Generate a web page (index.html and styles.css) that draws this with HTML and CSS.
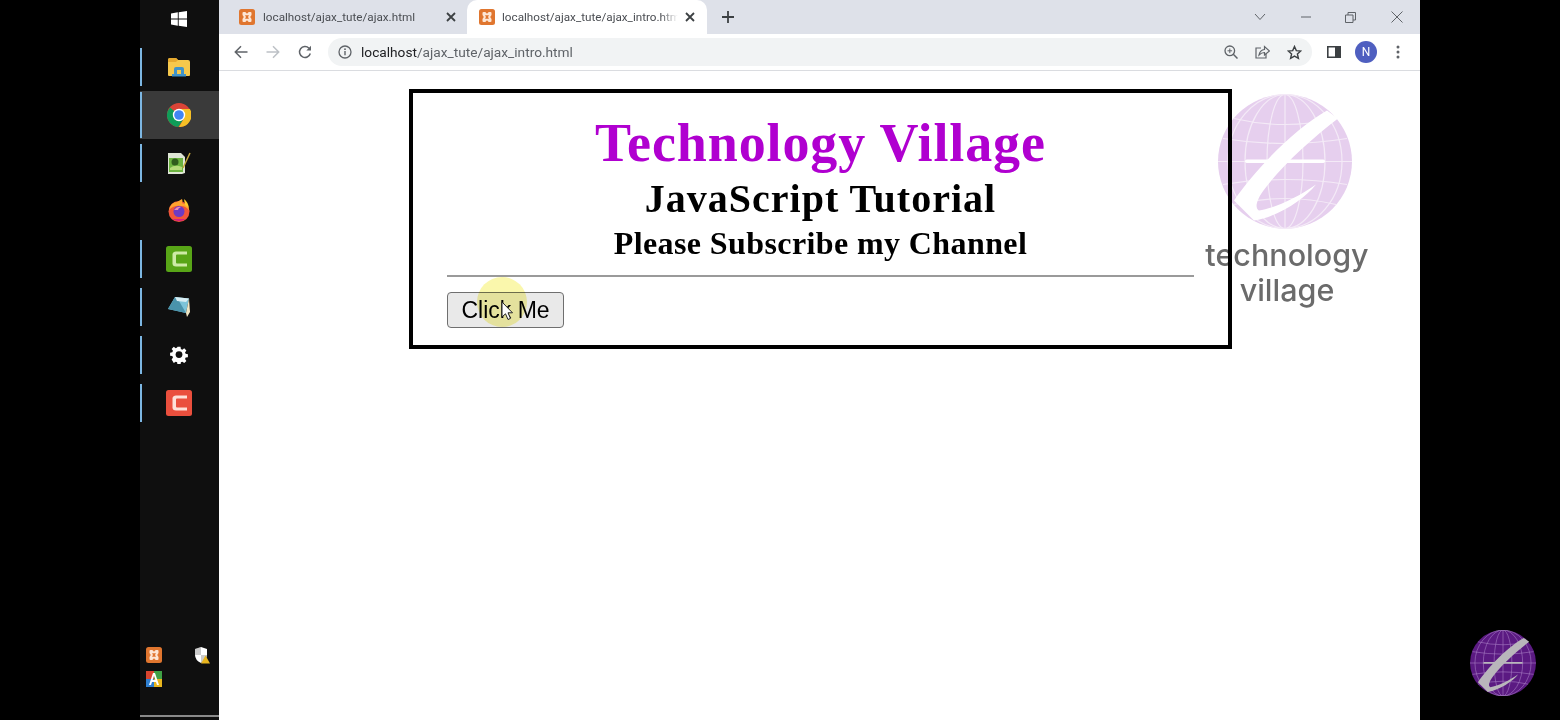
FILE: index.html
```html
<!DOCTYPE html>
<html lang="en">
<head>
    <meta charset="UTF-8">
    <meta name="viewport" content="width=device-width, initial-scale=1.0">
    <title>Ajax Intro</title>
    <link rel="stylesheet" href="styles.css">
</head>
<body>
    <!-- shared symbols -->
    <svg class="defs" width="0" height="0">
        <symbol id="xampp" viewBox="0 0 16 16">
            <rect width="16" height="16" rx="2.5" fill="#e0762f"/>
            <path d="M3.500 4Q3.500 3 4.500 3H6.300L8 4.700 9.700 3H11.500Q12.500 3 12.500 4V6L11.200 8 12.500 10V12Q12.500 13 11.500 13H9.700L8 11.300 6.300 13H4.500Q3.500 13 3.500 12V10L4.800 8 3.500 6z" fill="#fde6d4"/>
            <path d="M6 6.300H10L9 8 10 9.700H6L7 8z" fill="#e0762f"/>
        </symbol>
        <symbol id="globe" viewBox="0 0 134 134">
            <circle cx="67" cy="67" r="67" fill="var(--globe)"/>
            <g fill="none" stroke="var(--grid)" stroke-width="1.200">
                <ellipse cx="67" cy="67" rx="18" ry="67"/>
                <ellipse cx="67" cy="67" rx="40" ry="67"/>
                <ellipse cx="67" cy="67" rx="57" ry="67"/>
                <path d="M67 0v134M0 67h134"/>
                <path d="M16 24q51 12 102 0M5 44q62 10 124 0M5 90q62-10 124 0M16 110q51-12 102 0"/>
            </g>
            <path d="M109 16C77 34 38 74 16 106L36 126C61 122 87 104 98 90C81 102 57 114 41 116C36 114 39 104 47 94C64 71 94 44 120 24Z" fill="var(--swoosh)"/>
            <rect x="27" y="65" width="80" height="3.5" rx="1.7" fill="var(--swoosh)"/>
        </symbol>
        <symbol id="camtasia" viewBox="0 0 26 26">
            <rect width="26" height="26" rx="2.5" fill="var(--cam)"/>
            <path d="M21 5.500H10Q7 5.500 6.500 8V18Q7 20.500 10 20.500H21V17.500H11Q10 17.500 10 16.500V9.500Q10 8.500 11 8.500H21Z" fill="var(--cam-light)"/>
        </symbol>
    </svg>

    <div class="screen">
        <div class="letterbox"></div>

        <aside class="taskbar">
            <div class="start">
                <svg width="16" height="16" viewBox="0 0 16 16"><path d="M0 2.400 6.800 1.300V7.500H0zM7.700 1.200 16 0V7.500H7.700zM0 8.400H6.800V14.700L0 13.600zM7.700 8.400H16V16L7.700 14.800z" fill="#fff"/></svg>
            </div>
            <div class="task running">
                <svg width="24" height="20" viewBox="0 0 24 20"><path d="M1 3q0-2 2-2h6l2 2h10q2 0 2 2v13q0 1-1 1H2q-1 0-1-1z" fill="#f5c84c"/><path d="M1 3q0-2 2-2h6l2 2-2 2H1z" fill="#e5a92f"/><path d="M7 18v-6q0-2 2-2h6q2 0 2 2v6h-3v-5h-4v5z" fill="#3f93c9"/><rect x="5" y="17" width="14" height="2.500" fill="#3f93c9"/></svg>
            </div>
            <div class="task running active">
                <svg width="24" height="24" viewBox="0 0 24 24">
                    <circle cx="12" cy="12" r="12" fill="#db4437"/>
                    <path d="M12 12 1.600 18A12 12 0 0 1 3 4.500z" fill="#0f9d58"/>
                    <path d="M1.600 18 7 9l5 3 5.200 3-5.900 9A12 12 0 0 1 1.600 18z" fill="#0f9d58"/>
                    <path d="M12 24 17.200 15 12 6H22.900A12 12 0 0 1 12 24z" fill="#f6c026"/>
                    <circle cx="12" cy="12" r="6.200" fill="#fff"/>
                    <circle cx="12" cy="12" r="4.800" fill="#4285f4"/>
                </svg>
            </div>
            <div class="task running">
                <svg width="24" height="24" viewBox="0 0 24 24"><path d="M1 2h13l4 4v16l-3 1H1z" fill="#dfe6d5"/><rect x="2" y="7" width="14" height="14" fill="#6cb33f"/><circle cx="8" cy="11" r="3.500" fill="#2f5d1c"/><path d="M3 17q5-4 12-1v3H3z" fill="#b5dc7a"/><path d="M16 17 23 2" stroke="#c4a93b" stroke-width="1.500"/></svg>
            </div>
            <div class="task task-fox">
                <svg width="24" height="24" viewBox="0 0 24 24"><circle cx="12" cy="13.500" r="10.500" fill="#f0553a"/><path d="M2 12Q4 4 10 4L15 1Q16 3 15 5Q21 6 22.500 13Q19 8 14 8Q7 7 2 12z" fill="#ffa42e"/><path d="M17 1q4 3 5 9l-4-3z" fill="#ffcb2e"/><circle cx="12" cy="13.500" r="5.500" fill="#6b3bc4"/><path d="M7 12q3-4 7-3-3 1-3 3h-4z" fill="#f08ab0"/><path d="M5 21q7 4 14 0-7 0-14 0z" fill="#d61e7d"/></svg>
            </div>
            <div class="task running cam-green">
                <svg width="26" height="26"><use href="#camtasia"/></svg>
            </div>
            <div class="task running">
                <svg width="24" height="22" viewBox="0 0 24 22"><path d="M8 1 22 2.500 19 17 1 13z" fill="#7cc4d9"/><path d="M8 1 1 13 19 17 12 5z" fill="#4a93ab"/><path d="M22 2.500 23 16 20 21 19 17z" fill="#f0e6c3"/><path d="M8 1 22 2.500 19 6 10 5z" fill="#d7edf3"/></svg>
            </div>
            <div class="task running">
                <svg width="18" height="18" viewBox="0 0 18 18"><path d="M7.300 0h3.400l.4 2.500 1.600.7 2.100-1.500 2.400 2.400-1.500 2.100.7 1.600 2.500.4v3.400l-2.500.4-.7 1.600 1.500 2.100-2.400 2.400-2.100-1.500-1.600.7-.4 2.500H7.300l-.4-2.500-1.600-.7-2.100 1.500L.8 14l1.500-2.100-.7-1.600L-.9 9.900V6.500l2.500-.4.7-1.600L.8 2.400 3.200 0l2.100 1.500 1.600-.7z" transform="translate(.9 .8) scale(.9)" fill="#fff"/><circle cx="9" cy="8.600" r="3.400" fill="#111"/></svg>
            </div>
            <div class="task running cam-red">
                <svg width="26" height="26"><use href="#camtasia"/></svg>
            </div>

            <div class="tray">
                <svg width="16" height="16"><use href="#xampp"/></svg>
                <svg width="16" height="17" viewBox="0 0 16 17"><path d="M7 0 13 2V8Q13 13 7 16 1 13 1 8V2z" fill="#fff"/><path d="M7 0V8H1V2zM7 8H13Q13 13 7 16z" fill="#2b2b2b" opacity=".25"/><path d="M11.500 8.500 16 16.500H7z" fill="#e8b51f"/></svg>
                <svg width="16" height="16" viewBox="0 0 16 16"><rect width="8" height="8" fill="#d9452f"/><rect x="8" width="8" height="8" fill="#3fa045"/><rect y="8" width="8" height="8" fill="#2f7fd0"/><rect x="8" y="8" width="8" height="8" fill="#e9b61e"/><path d="M3 14 7 2h2l4 12h-2l-1-3H6l-1 3zM6.600 9h2.800L8 4.800z" fill="#fff"/></svg>
            </div>
            <div class="task-line"></div>
        </aside>

        <main class="browser">
            <div class="tabstrip">
                <div class="tab">
                    <svg width="16" height="16"><use href="#xampp"/></svg>
                    <span class="tab-title">localhost/ajax_tute/ajax.html</span>
                    <svg class="tab-close" width="10" height="10" viewBox="0 0 10 10"><path d="M1 1l8 8M9 1l-8 8" stroke="#3c4043" stroke-width="1.800"/></svg>
                </div>
                <div class="tab tab-active">
                    <svg width="16" height="16"><use href="#xampp"/></svg>
                    <span class="tab-title">localhost/ajax_tute/ajax_intro.html</span>
                    <svg class="tab-close" width="10" height="10" viewBox="0 0 10 10"><path d="M1 1l8 8M9 1l-8 8" stroke="#3c4043" stroke-width="1.800"/></svg>
                </div>
                <svg class="new-tab" width="14" height="14" viewBox="0 0 14 14"><path d="M7 1v12M1 7h12" stroke="#3c4043" stroke-width="1.800"/></svg>

                <div class="window-controls">
                    <svg width="12" height="8" viewBox="0 0 12 8"><path d="M1 1l5 5.500L11 1" fill="none" stroke="#5f6368" stroke-width="1"/></svg>
                    <svg width="10" height="2" viewBox="0 0 10 2"><path d="M0 1h10" stroke="#5f6368" stroke-width="1"/></svg>
                    <svg width="11" height="11" viewBox="0 0 11 11"><path d="M.5 3h7.500v7.500H.5zM3 3V.5h7.500V8H8" fill="none" stroke="#5f6368" stroke-width="1"/></svg>
                    <svg width="12" height="12" viewBox="0 0 12 12"><path d="M.5.5l11 11M11.500.5l-11 11" stroke="#5f6368" stroke-width="1"/></svg>
                </div>
            </div>

            <div class="toolbar">
                <div class="nav-buttons">
                    <svg width="14" height="14" viewBox="0 0 14 14"><path d="M13.500 7H1.500M7 1.300 1.300 7 7 12.700" fill="none" stroke="#5f6368" stroke-width="1.500"/></svg>
                    <svg width="14" height="14" viewBox="0 0 14 14"><path d="M.5 7h12M7 1.300 12.700 7 7 12.700" fill="none" stroke="#bdc1c6" stroke-width="1.500"/></svg>
                    <svg width="14" height="14" viewBox="0 0 14 14"><path d="M12.300 8.500A5.500 5.500 0 1 1 11 3.200" fill="none" stroke="#5f6368" stroke-width="1.500"/><path d="M13 .8V5.500H8.300z" fill="#5f6368"/></svg>
                </div>
                <div class="omnibox">
                    <svg width="14" height="14" viewBox="0 0 14 14"><circle cx="7" cy="7" r="6" fill="none" stroke="#5f6368" stroke-width="1.300"/><path d="M7 6v4.300" stroke="#5f6368" stroke-width="1.400"/><circle cx="7" cy="4.200" r=".9" fill="#5f6368"/></svg>
                    <span class="url"><b>localhost</b>/ajax_tute/ajax_intro.html</span>
                    <div class="omni-actions">
                        <svg width="14" height="14" viewBox="0 0 14 14"><circle cx="5.800" cy="5.800" r="4.800" fill="none" stroke="#5f6368" stroke-width="1.300"/><path d="M9.300 9.300 13.500 13.500" stroke="#5f6368" stroke-width="1.500"/><path d="M3.500 5.800h4.600M5.800 3.500v4.600" stroke="#5f6368"/></svg>
                        <svg width="15" height="14" viewBox="0 0 15 14"><path d="M6 3H1v10h10V9" fill="none" stroke="#5f6368" stroke-width="1.200"/><path d="M4 10Q5 5 9.500 4.500V1.500L14.500 6 9.500 10V7.500Q6.500 7.500 4 10z" fill="none" stroke="#5f6368" stroke-width="1.200"/></svg>
                        <svg width="15" height="15" viewBox="0 0 15 15"><path d="M7.500 1.500 9.300 5.600 13.800 6 10.400 9 11.400 13.400 7.500 11.100 3.600 13.400 4.600 9 1.200 6 5.700 5.600z" fill="none" stroke="#3c4043" stroke-width="1.400"/></svg>
                    </div>
                </div>
                <div class="toolbar-end">
                    <svg width="14" height="12" viewBox="0 0 14 12"><path d="M.8.800h12.400v10.400H.8z" fill="none" stroke="#3c4043" stroke-width="1.600"/><rect x="8" y="1" width="5" height="10" fill="#3c4043"/></svg>
                    <span class="avatar">N</span>
                    <svg width="4" height="14" viewBox="0 0 4 14"><circle cx="2" cy="2" r="1.500" fill="#5f6368"/><circle cx="2" cy="7" r="1.500" fill="#5f6368"/><circle cx="2" cy="12" r="1.500" fill="#5f6368"/></svg>
                </div>
            </div>

            <div class="page">
                <div class="container">
                    <h1>Technology Village</h1>
                    <h2>JavaScript Tutorial</h2>
                    <h3>Please Subscribe my Channel</h3>
                    <hr>
                    <button type="button">Click Me</button>
                </div>
            </div>
        </main>

        <div class="letterbox"></div>
    </div>

    <!-- video overlays -->
    <div class="watermark">
        <svg class="globe-light" width="134" height="135"><use href="#globe"/></svg>
        <p>technology<br>village</p>
    </div>
    <div class="highlight"></div>
    <svg class="pointer" width="13" height="20" viewBox="0 0 13 20"><path d="M1 1V16L4.500 12.800 7 18.500 9.500 17.400 7 11.800H11.500z" fill="#fff" stroke="#222" stroke-width="1"/></svg>
    <svg class="globe-badge" width="66" height="66"><use href="#globe"/></svg>
</body>
</html>
```

FILE: styles.css
```css
/* Base */
html, body {
    margin: 0;
    padding: 0;
    height: 100%;
    overflow: hidden;
    background: #000;
    font-family: Roboto, sans-serif;
}

.defs {
    position: absolute;
}

.screen {
    display: flex;
    height: 720px;
}

.letterbox {
    width: 140px;
    flex: none;
    background: #000;
}

/* Windows taskbar on the left */
.taskbar {
    width: 79px;
    flex: none;
    display: flex;
    flex-direction: column;
    align-items: stretch;
    background: #0f0f0f;
}

.start {
    height: 43px;
    padding: 0 2px 6px 0;
    box-sizing: border-box;
    display: flex;
    justify-content: center;
    align-items: center;
}

.task {
    height: 48px;
    flex: none;
    box-sizing: border-box;
    padding-right: 2px;
    display: flex;
    justify-content: center;
    align-items: center;
}

.task-fox {
    padding-bottom: 2px;
}

.running {
    background: linear-gradient(#7db7e3, #7db7e3) left center / 2px 38px no-repeat;
}

.active {
    background: linear-gradient(#7db7e3, #7db7e3) left center / 2px 46px no-repeat, #3a3a3a;
}

.cam-green {
    --cam: #58a517;
    --cam-light: #cdeaa6;
}

.cam-red {
    --cam: #ea4f3d;
    --cam-light: #fde0d8;
}

.tray {
    margin-top: auto;
    display: grid;
    grid-template-columns: 16px 16px;
    justify-content: space-between;
    row-gap: 7px;
    padding: 0 9px 0 6px;
    margin-bottom: 28px;
}

.task-line {
    height: 2px;
    margin-bottom: 3px;
    background: #8a8a8a;
}

/* Browser window */
.browser {
    width: 1201px;
    flex: none;
    display: flex;
    flex-direction: column;
    background: #fff;
}

.tabstrip {
    height: 34px;
    flex: none;
    display: flex;
    align-items: center;
    background: #dee1e9;
}

.tab {
    box-sizing: border-box;
    width: 240px;
    height: 34px;
    flex: none;
    display: flex;
    align-items: center;
    gap: 8px;
    padding: 0 3px 0 20px;
    border-radius: 10px 10px 0 0;
}

.tab:first-child {
    margin-right: 8px;
}

.tab-active {
    background: #fff;
    padding: 0 12px;
    gap: 7px;
}

.tab-title {
    flex: 1;
    min-width: 0;
    font-size: 11.7px;
    line-height: 16px;
    white-space: nowrap;
    overflow: hidden;
    color: #4a4d52;
}

.tab-active .tab-title {
    -webkit-mask-image: linear-gradient(to right, #000 90%, transparent);
    mask-image: linear-gradient(to right, #000 90%, transparent);
}

.new-tab {
    margin-left: 14px;
}

.window-controls {
    margin-left: auto;
    width: 149px;
    padding-right: 17px;
    display: flex;
    justify-content: space-between;
    align-items: center;
}

.toolbar {
    height: 37px;
    flex: none;
    display: flex;
    align-items: center;
    box-sizing: border-box;
    border-bottom: 1px solid #dadce0;
    padding: 0 20px 0 15px;
}

.nav-buttons {
    width: 94px;
    flex: none;
    display: flex;
    gap: 18px;
    align-items: center;
}

.omnibox {
    width: 984px;
    height: 28px;
    flex: none;
    box-sizing: border-box;
    display: flex;
    align-items: center;
    gap: 9px;
    padding: 0 10px;
    border-radius: 14px;
    background: #f1f3f4;
}

.url {
    font-size: 13.7px;
    color: #5f6368;
}

.url b {
    font-weight: 400;
    color: #202124;
}

.omni-actions {
    margin-left: auto;
    display: flex;
    align-items: center;
    gap: 17px;
}

.toolbar-end {
    flex: 1;
    display: flex;
    align-items: center;
    padding-left: 15px;
}

.avatar {
    width: 22px;
    height: 22px;
    margin: 0 19px 0 14px;
    border-radius: 50%;
    display: flex;
    justify-content: center;
    align-items: center;
    background: #4f5fc0;
    color: #fff;
    font-size: 12px;
}

/* Page content */
.page {
    flex: 1;
    padding: 18px 0 0 190px;
}

.container {
    box-sizing: border-box;
    width: 823px;
    height: 260px;
    border: 4px solid #000;
    padding: 20px 34px 0;
    text-align: center;
    font-family: "Liberation Serif", serif;
}

h1, h2, h3 {
    margin: 0;
    font-weight: 700;
}

h1 {
    font-size: 54px;
    line-height: 60px;
    letter-spacing: .9px;
    color: #b000d0;
}

h2 {
    font-size: 40px;
    line-height: 52px;
    letter-spacing: 1px;
    color: #000;
}

h3 {
    font-size: 32px;
    line-height: 36px;
    letter-spacing: .4px;
    color: #000;
}

hr {
    height: 2px;
    margin: 14px 0 15px;
    border: none;
    background: #9a9a9a;
}

.container button {
    display: block;
    box-sizing: border-box;
    width: 117px;
    height: 36px;
    padding: 0;
    font-family: "Liberation Sans", sans-serif;
    font-size: 23px;
    color: #000;
    background: #e9e9e9;
    border: 1px solid #6f6f6f;
    border-radius: 4px;
}

/* Overlays burnt into the video */
.watermark {
    position: absolute;
    left: 1200px;
    top: 94px;
    width: 174px;
    text-align: center;
    mix-blend-mode: multiply;
    pointer-events: none;
}

.globe-light {
    display: block;
    margin-left: 18px;
    --globe: #e6cfee;
    --grid: #f4eaf7;
    --swoosh: #fff;
}

.watermark p {
    margin: 8px 0 0;
    font-family: Inter, sans-serif;
    font-weight: 500;
    font-size: 30.5px;
    line-height: 35px;
    color: #6b6b6b;
}

.highlight {
    position: absolute;
    left: 477px;
    top: 277px;
    width: 50px;
    height: 50px;
    border-radius: 50%;
    background: rgba(245, 240, 90, 0.5);
    mix-blend-mode: multiply;
}

.pointer {
    position: absolute;
    left: 501px;
    top: 301px;
}

.globe-badge {
    position: absolute;
    left: 1470px;
    top: 630px;
    --globe: #5b1a82;
    --grid: #a77cc4;
    --swoosh: #b9b6bb;
}
```
